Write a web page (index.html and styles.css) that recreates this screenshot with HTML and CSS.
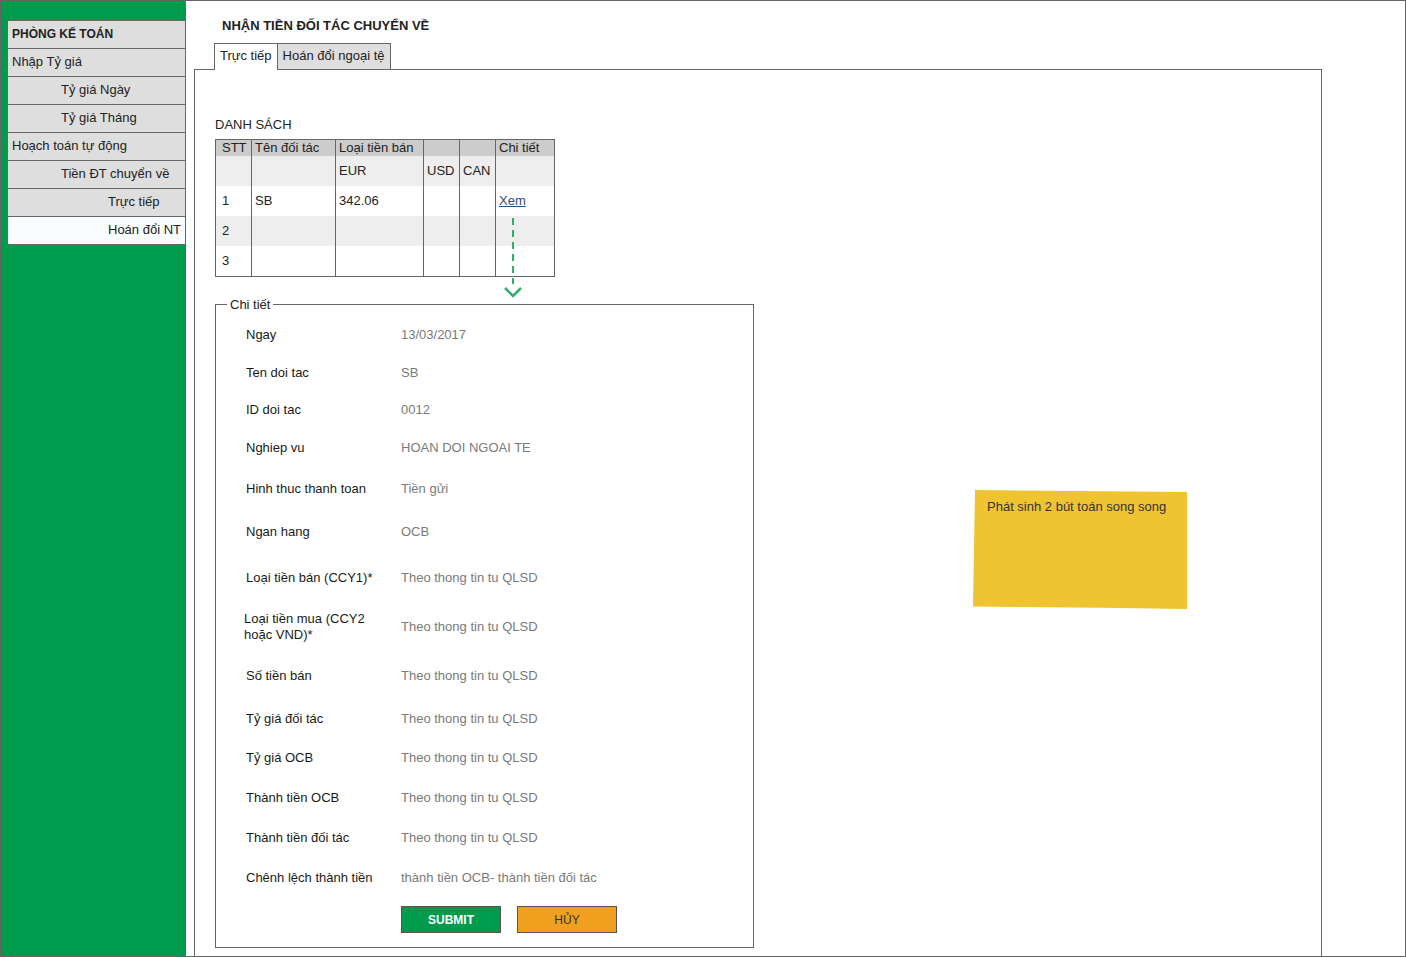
FILE: index.html
```html
<!DOCTYPE html>
<html lang="vi">
<head>
<meta charset="utf-8">
<title>Nhận tiền đối tác chuyển về</title>
<link rel="stylesheet" href="styles.css">
</head>
<body>
<div class="frame">
  <aside class="sidebar">
    <ul class="menu">
      <li class="menu-item head">PHÒNG KẾ TOÁN</li>
      <li class="menu-item">Nhập Tỷ giá</li>
      <li class="menu-item lvl2">Tỷ giá Ngày</li>
      <li class="menu-item lvl2">Tỷ giá Tháng</li>
      <li class="menu-item">Hoạch toán tự động</li>
      <li class="menu-item lvl2">Tiền ĐT chuyển về</li>
      <li class="menu-item lvl3">Trực tiếp</li>
      <li class="menu-item lvl3 active">Hoán đổi NT</li>
    </ul>
  </aside>
  <main class="main">
    <h1 class="title">NHẬN TIỀN ĐỐI TÁC CHUYỂN VỀ</h1>
    <div class="tabs">
      <div class="tab active">Trực tiếp</div>
      <div class="tab">Hoán đổi ngoại tệ</div>
    </div>
    <section class="panel">
      <div class="section-label">DANH SÁCH</div>
      <div class="table-wrap">
        <table class="list">
          <colgroup>
            <col class="c-stt"><col class="c-name"><col class="c-cur"><col class="c-sm"><col class="c-sm"><col class="c-det">
          </colgroup>
          <tr class="head">
            <th>STT</th><th>Tên đối tác</th><th>Loại tiền bán</th><th></th><th></th><th>Chi tiết</th>
          </tr>
          <tr class="sub">
            <td></td><td></td><td>EUR</td><td>USD</td><td>CAN</td><td></td>
          </tr>
          <tr>
            <td>1</td><td>SB</td><td>342.06</td><td></td><td></td><td><a class="link" href="#">Xem</a></td>
          </tr>
          <tr class="alt">
            <td>2</td><td></td><td></td><td></td><td></td><td></td>
          </tr>
          <tr>
            <td>3</td><td></td><td></td><td></td><td></td><td></td>
          </tr>
        </table>
        <svg class="arrow" width="20" height="82" viewBox="0 0 20 82">
          <line x1="10" y1="0" x2="10" y2="66" stroke="#2fb068" stroke-width="2" stroke-dasharray="7 5"/>
          <polyline points="2,70 10,78 18,70" fill="none" stroke="#2fb068" stroke-width="2.5"/>
        </svg>
      </div>

      <fieldset class="details">
        <legend>Chi tiết</legend>
        <div class="form">
          <div class="lbl">Ngay</div><div class="val">13/03/2017</div>
          <div class="lbl">Ten doi tac</div><div class="val">SB</div>
          <div class="lbl">ID doi tac</div><div class="val">0012</div>
          <div class="lbl">Nghiep vu</div><div class="val">HOAN DOI NGOAI TE</div>
          <div class="lbl">Hinh thuc thanh toan</div><div class="val">Tiền gửi</div>
          <div class="lbl">Ngan hang</div><div class="val">OCB</div>
          <div class="lbl">Loại tiền bán (CCY1)*</div><div class="val">Theo thong tin tu QLSD</div>
          <div class="lbl two">Loại tiền mua (CCY2<br>hoặc VND)*</div><div class="val">Theo thong tin tu QLSD</div>
          <div class="lbl">Số tiền bán</div><div class="val">Theo thong tin tu QLSD</div>
          <div class="lbl">Tỷ giá đối tác</div><div class="val">Theo thong tin tu QLSD</div>
          <div class="lbl">Tỷ giá OCB</div><div class="val">Theo thong tin tu QLSD</div>
          <div class="lbl">Thành tiền OCB</div><div class="val">Theo thong tin tu QLSD</div>
          <div class="lbl">Thành tiền đối tác</div><div class="val">Theo thong tin tu QLSD</div>
          <div class="lbl">Chênh lệch thành tiền</div><div class="val">thành tiền OCB- thành tiền đối tác</div>
        </div>
        <div class="actions">
          <button class="btn submit" type="button">SUBMIT</button>
          <button class="btn cancel" type="button">HỦY</button>
        </div>
      </fieldset>
    </section>
  </main>
  <div class="note">Phát sinh 2 bút toán song song</div>
</div>
</body>
</html>
```
FILE: styles.css
```css
html, body {
  margin: 0;
  padding: 0;
  background: #fff;
}

body {
  font-family: "Liberation Sans", Arial, sans-serif;
  font-size: 13px;
  color: #222;
}

.frame {
  position: relative;
  width: 1406px;
  height: 957px;
  box-sizing: border-box;
  border: 1px solid #666;
  display: flex;
  overflow: hidden;
  background: #fff;
}

/* Sidebar */
.sidebar {
  width: 185px;
  flex: none;
  box-sizing: border-box;
  background: #009b4c;
  border-right: 1px solid #666;
  padding-top: 19px;
}

.menu {
  list-style: none;
  margin: 0 -1px 0 6px;
  padding: 0;
}

.menu-item {
  height: 28px;
  box-sizing: border-box;
  border: 1px solid #666;
  border-bottom: none;
  background: #dedede;
  line-height: 26px;
  padding-left: 4px;
  white-space: nowrap;
  color: #222;
}

.menu-item:last-child {
  height: 29px;
  border-bottom: 1px solid #666;
}

.menu-item.head {
  font-weight: bold;
  font-size: 12px;
}

.menu-item.lvl2 { padding-left: 53px; }
.menu-item.lvl3 { padding-left: 100px; }
.menu-item.active { background: #f9fdfd; }

/* Main */
.main {
  flex: 1;
  min-width: 0;
  padding: 17px 0 0 8px;
  display: flex;
  flex-direction: column;
}

.title {
  margin: 0 0 0 28px;
  font-size: 13px;
  font-weight: bold;
  line-height: 16px;
  color: #222;
}

.tabs {
  display: flex;
  align-items: flex-start;
  margin: 9px 0 0 20px;
}

.tab {
  height: 26px;
  box-sizing: border-box;
  border: 1px solid #666;
  border-bottom: none;
  padding: 0 6px 0 5px;
  line-height: 24px;
  background: #dedede;
  white-space: nowrap;
}

.tab.active {
  height: 27px;
  margin-bottom: -1px;
  position: relative;
  z-index: 1;
  background: #fff;
  padding: 0 5px;
}

.tab + .tab {
  border-left: none;
}

.panel {
  width: 1128px;
  height: 960px;
  flex: none;
  box-sizing: border-box;
  border: 1px solid #666;
  padding: 47px 20px 0;
  background: #fff;
}

.section-label {
  line-height: 15px;
  margin-bottom: 7px;
}

/* Table */
.table-wrap {
  position: relative;
  width: max-content;
}

.list {
  border-collapse: collapse;
  border: 1px solid #666;
  table-layout: fixed;
  width: 339px;
}

.c-stt { width: 36px; }
.c-name { width: 84px; }
.c-cur { width: 88px; }
.c-sm { width: 36px; }
.c-det { width: 59px; }

.list th,
.list td {
  border-left: 1px solid #666;
  border-right: 1px solid #666;
  padding: 0 3px;
  text-align: left;
  font-weight: normal;
  white-space: nowrap;
  overflow: hidden;
  color: #222;
}

.list th:first-child,
.list td:first-child {
  padding-left: 6px;
  padding-right: 0;
}

.list tr.head th {
  height: 16px;
  line-height: 16px;
  background: #cccccc;
}

.list td {
  height: 30px;
  line-height: 16px;
  vertical-align: middle;
}

.list tr.sub td,
.list tr.alt td {
  background: #eeeeee;
}

.link {
  color: #1f4e93;
  text-decoration: underline;
}

.arrow {
  position: absolute;
  left: 288px;
  top: 79px;
}

/* Details */
.details {
  width: 539px;
  box-sizing: border-box;
  border: 1px solid #666;
  margin: 20px 0 0;
  padding: 0;
  min-width: 0;
}

.details legend {
  margin-left: 11px;
  padding: 0 3px;
  line-height: 15px;
  color: #222;
}

.form {
  display: grid;
  grid-template-columns: 155px auto;
  grid-template-rows: 38px 38px 36px 39px 43px 44px 47px 51px 47px 39px 40px 40px 40px 40px;
  align-items: center;
  padding: 4px 0 0 30px;
}

.lbl {
  color: #1a1a1a;
  line-height: 16px;
}

.lbl.two {
  margin-left: -2px;
}

.val {
  color: #7a7a7a;
  line-height: 16px;
}

.actions {
  display: flex;
  gap: 16px;
  padding: 8px 0 14px 185px;
}

.btn {
  width: 100px;
  height: 27px;
  box-sizing: border-box;
  border: 1px solid #555;
  border-radius: 0;
  font-family: "Liberation Sans", Arial, sans-serif;
  font-size: 12px;
  padding: 0;
  cursor: pointer;
}

.btn.submit {
  background: #009b4c;
  color: #fff;
  font-weight: bold;
}

.btn.cancel {
  background: #f0a01e;
  color: #333;
}

/* Sticky note */
.note {
  position: absolute;
  left: 972px;
  top: 489px;
  width: 214px;
  height: 119px;
  box-sizing: border-box;
  padding: 9px 14px;
  line-height: 16px;
  background: #f0c330;
  color: #333;
  clip-path: polygon(2px 0, 100% 2px, 100% 100%, 60% 99%, 0 98%);
}
```
